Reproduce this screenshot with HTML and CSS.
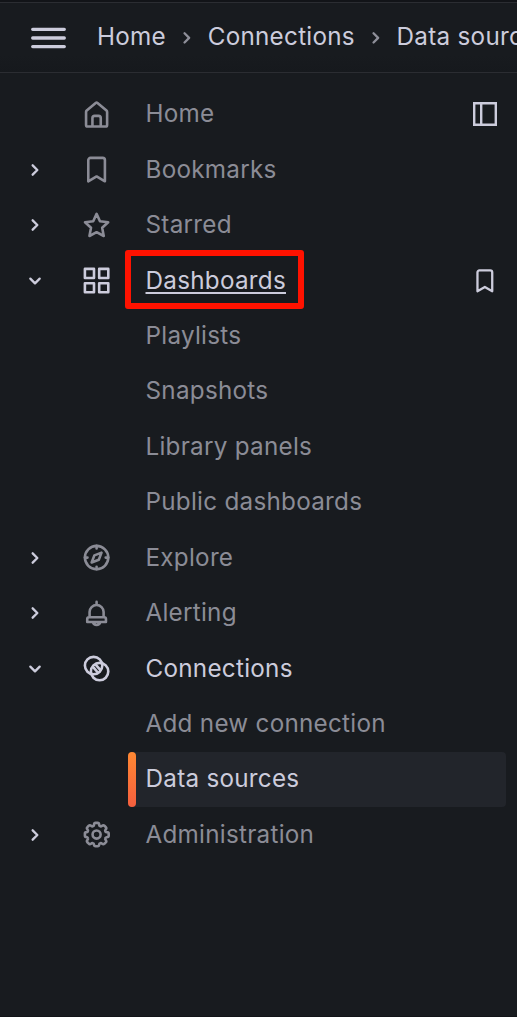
FILE: index.html
```html
<!DOCTYPE html>
<html lang="en">
<head>
<meta charset="utf-8">
<title>Data sources</title>
<link rel="stylesheet" href="styles.css">
</head>
<body>
<svg class="symbols" aria-hidden="true">
  <symbol id="right" viewBox="0 0 24 24"><path d="M10 8l4 4-4 4"/></symbol>
  <symbol id="down" viewBox="0 0 24 24"><path d="M8 10l4 4 4-4"/></symbol>
  <symbol id="home" viewBox="0 0 24 24"><path d="M3.9 10a1.5 1.5 0 0 1 .5-1.1l6.9-5.8a1.1 1.1 0 0 1 1.4 0l6.9 5.8a1.5 1.5 0 0 1 .5 1.1v10a1.2 1.2 0 0 1-1.2 1.2H5.1A1.2 1.2 0 0 1 3.9 20zM8.8 21v-6.3a1.7 1.7 0 0 1 1.7-1.7h3a1.7 1.7 0 0 1 1.7 1.7V21"/></symbol>
  <symbol id="bookmark" viewBox="0 0 24 24"><path d="M7.3 3h9.4a1.7 1.7 0 0 1 1.7 1.7V21L12 17.3 5.6 21V4.7A1.7 1.7 0 0 1 7.3 3z"/></symbol>
  <symbol id="star" viewBox="0 0 24 24"><path d="M12 3l2.6 5.6 6.3.8-4.6 4.3 1.2 6.3-5.5-2.9L6.5 20l1.2-6.3-4.6-4.3 6.3-.8z"/></symbol>
  <symbol id="apps" viewBox="0 0 24 24"><path d="M3 3h7v7H3zM14 3h7v7h-7zM3 14h7v7H3zM14 14h7v7h-7z"/></symbol>
  <symbol id="compass" viewBox="0 0 24 24"><circle cx="12" cy="12" r="9"/><path d="M12 3v2M12 19v2M3 12h2M19 12h2"/><path d="M15.8 8.2l-5.5 2.1-2.1 5.5 5.5-2.1z"/></symbol>
  <symbol id="bell" viewBox="0 0 24 24"><path d="M12 3v2M6.6 14.8v-4a5.4 5.4 0 0 1 10.8 0v4M6.2 14.8h11.6a1.4 1.4 0 0 1 1.4 1.4v2.3H4.8v-2.3a1.4 1.4 0 0 1 1.4-1.4zM9.2 18.6a2.9 2.9 0 0 0 5.6 0"/></symbol>
  <symbol id="connections" viewBox="0 0 24 24"><circle cx="9.7" cy="9.7" r="6.7"/><circle cx="14.3" cy="14.3" r="6.7"/><path d="M9.7 11.3l3.2 3.7M11.6 9.3l3.2 3.7"/></symbol>
  <symbol id="cog" viewBox="0 0 24 24"><path d="M10 4.6Q10.1 3 11.2 3h1.6q1.1 0 1.2 1.6.1.8.9 1 .6.2 1.1-.2 1.3-1 2-.2l1.1 1.1q.8.8-.2 2-.5.5-.2 1.1.2.6 1 .7 1.6.1 1.6 1.1v1.6q0 1.1-1.6 1.2-.8.1-1 .9-.3.6.2 1.1 1 1.3.2 2L18 19q-.8.8-2-.2-.5-.5-1.1-.2-.8.2-.9 1-.1 1.4-1.2 1.4h-1.6q-1.1 0-1.2-1.4-.1-.8-.9-1-.6-.3-1.1.2-1.3 1-2 .2l-1.1-1.1q-.8-.8.2-2 .5-.5.2-1.1-.2-.8-1-.9Q3 13.8 3 12.8v-1.6q0-1 1.3-1.1.8-.1 1-.7.3-.6-.2-1.1-1-1.3-.2-2L6 5.2q.8-.8 2 .2.5.4 1.1.2.8-.2.9-1z"/><circle cx="12" cy="12" r="3.1"/></symbol>
</svg>
<header class="topbar">
  <svg class="menu" viewBox="0 0 35 22"><path d="M1.7 2.3h31.6M1.7 11h31.6M1.7 19.6h31.6"/></svg>
  <nav class="crumbs">
    <span>Home</span><svg class="icon sep"><use href="#right"/></svg><span>Connections</span><svg class="icon sep"><use href="#right"/></svg><span>Data sources</span>
  </nav>
</header>
<nav class="nav">
  <div class="row"><i></i><svg class="icon"><use href="#home"/></svg><span class="label">Home</span><svg class="dock" viewBox="0 0 24 24"><path d="M1.2 1.2h21.6v21.6H1.2zM8.2 1v22"/></svg></div>
  <div class="row"><svg class="icon arrow"><use href="#right"/></svg><svg class="icon"><use href="#bookmark"/></svg><span class="label">Bookmarks</span></div>
  <div class="row"><svg class="icon arrow"><use href="#right"/></svg><svg class="icon"><use href="#star"/></svg><span class="label">Starred</span></div>
  <div class="row bright"><svg class="icon arrow"><use href="#down"/></svg><svg class="icon"><use href="#apps"/></svg><span class="label marked">Dashboards</span><svg class="icon pin"><use href="#bookmark"/></svg></div>
  <div class="row"><span class="label child">Playlists</span></div>
  <div class="row"><span class="label child">Snapshots</span></div>
  <div class="row"><span class="label child">Library panels</span></div>
  <div class="row"><span class="label child">Public dashboards</span></div>
  <div class="row"><svg class="icon arrow"><use href="#right"/></svg><svg class="icon"><use href="#compass"/></svg><span class="label">Explore</span></div>
  <div class="row"><svg class="icon arrow"><use href="#right"/></svg><svg class="icon"><use href="#bell"/></svg><span class="label">Alerting</span></div>
  <div class="row bright"><svg class="icon arrow"><use href="#down"/></svg><svg class="icon"><use href="#connections"/></svg><span class="label">Connections</span></div>
  <div class="row"><span class="label child">Add new connection</span></div>
  <div class="row bright"><span class="label child active">Data sources</span></div>
  <div class="row"><svg class="icon arrow"><use href="#right"/></svg><svg class="icon"><use href="#cog"/></svg><span class="label">Administration</span></div>
</nav>
</body>
</html>
```
FILE: styles.css
```css
*, *::before, *::after { box-sizing: border-box; }
body {
  margin: 0;
  height: 1017px;
  overflow: hidden;
  background: #181b1f;
  color: #ccccdc;
  font: 24.26px/36px Inter, sans-serif;
  letter-spacing: 0.26px;
  border-bottom: 1px solid #121418;
}
.symbols { display: none; }
svg {
  flex: none;
  fill: none;
  stroke: currentColor;
  stroke-width: 2;
  stroke-linejoin: round;
  stroke-linecap: round;
}
.topbar {
  height: 73px;
  padding: 0 0 0 31px;
  display: flex;
  align-items: center;
  overflow: hidden;
  background: linear-gradient(#121418 0 2px, #2b2d32 2px 3px, #181b1f 3px 55px, #16191d 72px);
  border-bottom: 1px solid #2b2d32;
}
.menu { width: 35px; height: 22px; stroke-width: 3.3; margin-top: 3px; }
.crumbs { display: flex; align-items: center; margin-left: 31px; white-space: nowrap; }
.sep { width: 27.7px; height: 27.7px; margin: 4px 7px 0; color: #8e8f99; }
.nav { padding-top: 13.6px; }
.row {
  height: 55.44px;
  display: grid;
  grid-template-columns: 60px 47px 1fr auto;
  align-items: center;
  padding: 0 11px 0 21px;
  color: #8b8c96;
}
.row .icon { width: 31.2px; height: 31.2px; }
.row .arrow { width: 28px; height: 28px; color: #ccccdc; }
.label {
  position: relative;
  padding: 0 0 2.2px 17.5px;
  white-space: nowrap;
}
.bright { color: #ccccdc; }
.child { grid-column: 3 / 5; }
.dock { width: 24px; height: 24px; stroke-width: 2.4; margin-right: 9px; stroke-linejoin: miter; }
.row .dock { color: #ccccdc; }
.row .pin { width: 27.7px; height: 27.7px; margin-right: 7px; }
.marked { text-decoration: underline; text-decoration-thickness: 2px; text-underline-offset: 3px; }
.marked::after {
  content: "";
  position: absolute;
  left: -3px;
  top: -11.1px;
  width: 179px;
  height: 59px;
  border: 6px solid #ff1200;
  border-radius: 3px;
}
.active {
  height: 55px;
  line-height: 53.6px;
  background: #22252b;
  border-radius: 4px;
}
.active::before {
  content: "";
  position: absolute;
  left: 0;
  top: 0;
  width: 7.5px;
  height: 55px;
  border-radius: 4px;
  background: linear-gradient(#ff8833, #f55f3e);
}
```
